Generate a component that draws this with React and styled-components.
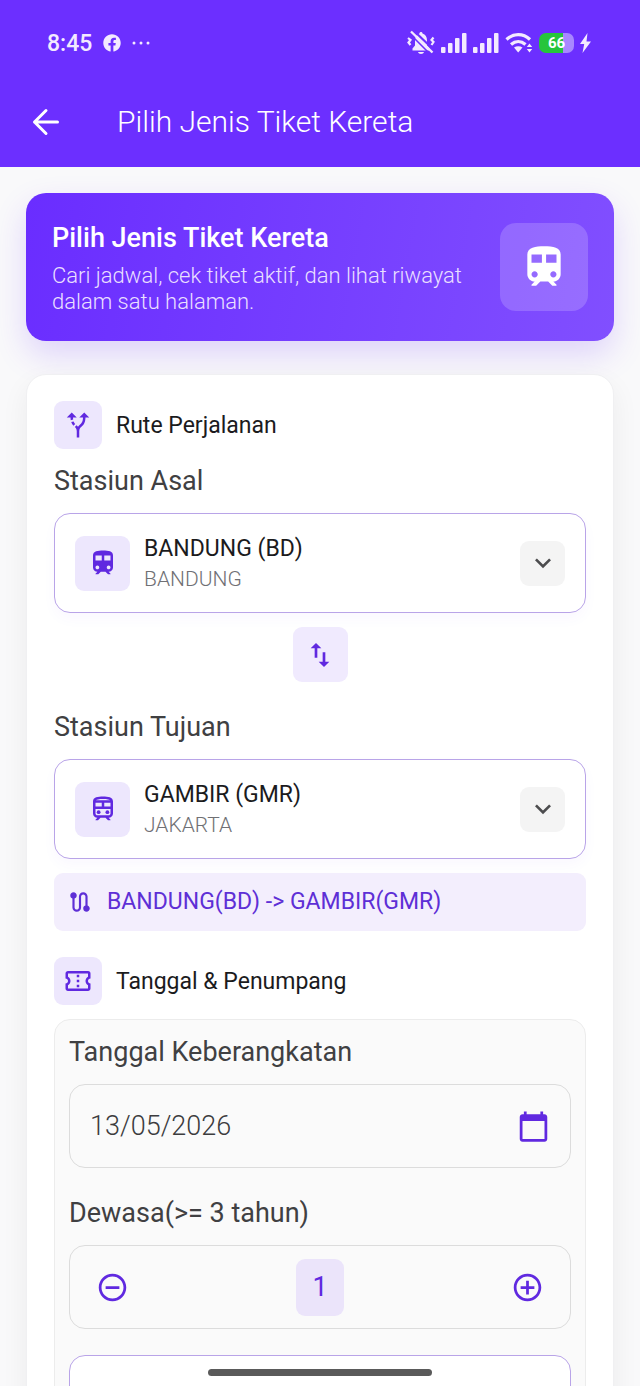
import React, { useState } from 'react'
import styled, { createGlobalStyle } from 'styled-components'
import { FaFacebook } from 'react-icons/fa'
import {
  MdAddCircleOutline,
  MdAltRoute,
  MdCalendarToday,
  MdKeyboardArrowDown,
  MdOutlineConfirmationNumber,
  MdOutlineTrain,
  MdRemoveCircleOutline,
  MdRoute,
  MdSwapVert,
  MdTrain,
} from 'react-icons/md'

const GlobalStyle = createGlobalStyle`
* { box-sizing: border-box; }
body {
  margin: 0;
  background: #f9f9fa;
  color: #1b1b1d;
  font-family: Roboto, "Liberation Sans", sans-serif;
}
button, input, select {
  font-family: inherit;
  border: 0;
  padding: 0;
  margin: 0;
  background: none;
  color: inherit;
}
h1, h2, h3, p { margin: 0; }
svg { display: block; flex-shrink: 0; }
`;

const Screen = styled.div`
display: flex;
flex-direction: column;
height: 100vh;
`;

const Header = styled.header`
flex-shrink: 0;
background: #6c2fff;
color: #fff;
`;

const StatusBar = styled.div`
display: flex;
align-items: center;
justify-content: space-between;
height: 77px;
padding: 8px 49px 0 47px;
color: #f3eaff;
`;

const StatusGroup = styled.div`
display: flex;
align-items: center;
gap: ${(p) => p.$gap}px;
`;

const Clock = styled.span`
padding-top: 2px;
font-size: 23px;
font-weight: 500;
line-height: 28px;
`;

const Battery = styled.span`
display: flex;
align-items: center;
justify-content: center;
width: 35px;
height: 20px;
border-radius: 7px;
background: linear-gradient(90deg, #26c53c 68%, #a887ff 68%);
color: #fff;
font-size: 15px;
font-weight: 700;
line-height: 20px;
`;

const Toolbar = styled.div`
display: flex;
align-items: center;
gap: 57px;
height: 90px;
padding: 0 32px;
`;

const BackButton = styled.button`
display: flex;
cursor: pointer;
`;

const PageTitle = styled.h1`
font-size: 30px;
font-weight: 300;
line-height: 36px;
`;

const Content = styled.main`
flex: 1;
min-height: 0;
overflow-y: auto;
scrollbar-width: none;
padding: 26px;
`;

const Hero = styled.section`
display: flex;
align-items: center;
justify-content: space-between;
gap: 26px;
padding: 26px;
border-radius: 20px;
background: linear-gradient(100deg, #6a2dff, #814fff);
box-shadow: 0 14px 32px rgba(108, 47, 255, 0.18);
color: #fff;
`;

const HeroTitle = styled.h2`
padding-top: 2px;
font-size: 27px;
font-weight: 500;
line-height: 34px;
`;

const HeroText = styled.p`
margin-top: 8px;
font-size: 22px;
font-weight: 300;
line-height: 26px;
color: #e9dfff;
`;

const HeroIcon = styled.div`
display: flex;
align-items: center;
justify-content: center;
flex-shrink: 0;
width: 88px;
height: 88px;
border-radius: 16px;
background: rgba(255, 255, 255, 0.18);
`;

const Card = styled.form`
margin-top: 33px;
padding: 26px 27px;
border: 1px solid #f0f0f2;
border-radius: 20px;
background: #fff;
box-shadow: 0 10px 28px rgba(0, 0, 0, 0.06);
`;

const SectionHead = styled.div`
display: flex;
align-items: center;
gap: 14px;
margin-top: ${(p) => p.$top || 0}px;
`;

const SectionTitle = styled.h3`
padding-top: 2px;
font-size: 23px;
font-weight: 400;
line-height: 30px;
`;

const Tile = styled.span`
display: flex;
align-items: center;
justify-content: center;
flex-shrink: 0;
width: ${(p) => p.$size}px;
height: ${(p) => p.$size}px;
border-radius: 9px;
background: #ede7fd;
color: #6029e0;
`;

const FieldLabel = styled.label`
display: block;
margin: ${(p) => p.$top || 0}px 0 14px;
font-size: 27px;
line-height: 36px;
color: #404042;
`;

const StationBox = styled.div`
display: flex;
align-items: center;
gap: 14px;
height: 100px;
padding: 0 20px;
border: 1px solid #b9a4e8;
border-radius: 16px;
background: #fff;
box-shadow: 0 6px 14px rgba(108, 47, 255, 0.03);
`;

const StationText = styled.div`
flex: 1;
min-width: 0;
padding-top: 2px;
`;

const StationSelect = styled.select`
display: block;
width: 100%;
height: 30px;
appearance: none;
font-size: 23px;
line-height: 30px;
cursor: pointer;
`;

const StationCity = styled.p`
font-size: 21px;
font-weight: 300;
line-height: 30px;
color: #707074;
`;

const Chevron = styled.span`
display: flex;
align-items: center;
justify-content: center;
width: 45px;
height: 45px;
border-radius: 9px;
background: #f4f4f4;
color: #4c4c4e;
`;

const SwapButton = styled.button`
display: flex;
align-items: center;
justify-content: center;
width: 55px;
height: 55px;
margin: 14px auto 0;
border-radius: 9px;
background: #f0eafe;
color: #6029e0;
cursor: pointer;
`;

const RouteSummary = styled.div`
display: flex;
align-items: center;
gap: 14px;
min-height: 58px;
margin-top: 14px;
padding: 0 13px;
border-radius: 9px;
background: #f3eefd;
color: #5e2fd6;
font-size: 23px;
line-height: 30px;
`;

const Panel = styled.div`
margin-top: 14px;
padding: 14px;
border: 1px solid #ececec;
border-radius: 16px;
background: #fafafa;
`;

const InputBox = styled.div`
display: flex;
align-items: center;
justify-content: space-between;
height: 84px;
padding: 0 ${(p) => p.$pad}px;
border: 1px solid #dcdcdc;
border-radius: 16px;
color: #6029e0;
`;

const DateInput = styled.input`
flex: 1;
min-width: 0;
font-size: 27px;
font-weight: 300;
line-height: 36px;
color: #3c3c3e;
`;

const StepButton = styled.button`
display: flex;
cursor: pointer;
`;

const Count = styled.output`
width: 48px;
border-radius: 9px;
background: #ebe4fa;
text-align: center;
font-size: 27px;
font-weight: 400;
line-height: 57px;
`;

const NextBox = styled.div`
height: 100px;
margin-top: 26px;
border: 1px solid #b9a4e8;
border-radius: 16px;
background: #fff;
`;

const HomeIndicator = styled.div`
position: fixed;
bottom: 10px;
left: 50%;
width: 35%;
height: 7px;
border-radius: 4px;
background: #5a5a5a;
transform: translateX(-50%);
`;

const BackArrow = () => (
  <svg width="28" height="28" viewBox="0 0 28 28" fill="none" stroke="currentColor" strokeWidth="3" strokeLinecap="round" strokeLinejoin="round">
    <path d="M25.500 14H2.500M14 2.500L2.500 14L14 25.500" />
  </svg>
)

const MutedBell = () => (
  <svg width="28" height="26" viewBox="0 0 28 26" fill="none" stroke="currentColor">
    <path d="M12.500 3.500C12.500 1.500 15.500 1.500 15.500 3.500C18.500 4.500 20 7 20 10.500V15.500L22.500 18.500V20.500H5.500V18.500L8 15.500V10.500C8 7 9.500 4.500 12.500 3.500Z" fill="currentColor" stroke="none" />
    <path d="M11 22H17C16.500 24.500 11.500 24.500 11 22Z" fill="currentColor" stroke="none" />
    <path d="M1 8L3.500 10L1.500 12.500L3.500 15M26.500 7.500L24.500 10L26.500 12L24.500 15" strokeWidth="2.200" />
    <path d="M6 0L27.500 20.500" stroke="#6c2fff" strokeWidth="2.200" />
    <path d="M4 1.500L25.500 22.500" strokeWidth="2.400" />
    <path d="M2.500 3.500L23.500 24.500" stroke="#6c2fff" strokeWidth="1.600" />
  </svg>
)

const Signal = () => (
  <svg width="26" height="20" viewBox="0 0 26 20" fill="currentColor">
    <rect x="0" y="14" width="4.500" height="6" rx="1" />
    <rect x="7" y="10" width="4.500" height="10" rx="1" />
    <rect x="14" y="5" width="4.500" height="15" rx="1" />
    <rect x="21" y="0" width="4.500" height="20" rx="1" />
  </svg>
)

const Wifi = () => (
  <svg width="28" height="20" viewBox="0 0 28 20" fill="none" stroke="currentColor">
    <path d="M1.500 6.500C8.500 0 18 0 25 6.500" strokeWidth="3.200" />
    <path d="M6 11.500C10.500 7.500 16 7.500 20.500 11.500" strokeWidth="3.200" />
    <path d="M9 14.500C11.500 12.800 15 12.800 17.500 14.500L13.200 19.500Z" fill="currentColor" stroke="none" />
    <path d="M24.500 10.500L27.200 14H21.800ZM24.500 19.500L27.200 16H21.800Z" fill="currentColor" stroke="none" />
  </svg>
)

const Bolt = () => (
  <svg width="11" height="20" viewBox="0 0 11 20" fill="currentColor">
    <path d="M7.500 0L0 11H4.200L2.500 20L11 8.500H6.500Z" />
  </svg>
)

const Dots = () => (
  <svg width="18" height="4" viewBox="0 0 18 4" fill="currentColor">
    <circle cx="2" cy="2" r="1.500" />
    <circle cx="9" cy="2" r="1.500" />
    <circle cx="16" cy="2" r="1.500" />
  </svg>
)

const stations = {
  BD: { name: 'BANDUNG', city: 'BANDUNG' },
  GMR: { name: 'GAMBIR', city: 'JAKARTA' },
}

const StationField = ({ id, icon, value, onChange }) => (
  <StationBox>
    <Tile $size={55}>{icon}</Tile>
    <StationText>
      <StationSelect id={id} value={value} onChange={(e) => onChange(e.target.value)}>
        {Object.keys(stations).map((code) => (
          <option key={code} value={code}>{`${stations[code].name} (${code})`}</option>
        ))}
      </StationSelect>
      <StationCity>{stations[value].city}</StationCity>
    </StationText>
    <Chevron><MdKeyboardArrowDown size={32} /></Chevron>
  </StationBox>
)

const App = () => {
  const [from, setFrom] = useState('BD')
  const [to, setTo] = useState('GMR')
  const [date, setDate] = useState('13/05/2026')
  const [adults, setAdults] = useState(1)

  const swap = () => {
    setFrom(to)
    setTo(from)
  }

  return (
    <Screen>
      <GlobalStyle />
      <Header>
        <StatusBar>
          <StatusGroup $gap={11}>
            <Clock>8:45</Clock>
            <FaFacebook size={18} />
            <Dots />
          </StatusGroup>
          <StatusGroup $gap={6}>
            <MutedBell />
            <Signal />
            <Signal />
            <Wifi />
            <Battery>66</Battery>
            <Bolt />
          </StatusGroup>
        </StatusBar>
        <Toolbar>
          <BackButton type="button" aria-label="Kembali"><BackArrow /></BackButton>
          <PageTitle>Pilih Jenis Tiket Kereta</PageTitle>
        </Toolbar>
      </Header>
      <Content>
        <Hero>
          <div>
            <HeroTitle>Pilih Jenis Tiket Kereta</HeroTitle>
            <HeroText>Cari jadwal, cek tiket aktif, dan lihat riwayat dalam satu halaman.</HeroText>
          </div>
          <HeroIcon><MdTrain size={50} /></HeroIcon>
        </Hero>
        <Card>
          <SectionHead>
            <Tile $size={48}><MdAltRoute size={30} /></Tile>
            <SectionTitle>Rute Perjalanan</SectionTitle>
          </SectionHead>
          <FieldLabel htmlFor="asal" $top={14}>Stasiun Asal</FieldLabel>
          <StationField id="asal" icon={<MdTrain size={30} />} value={from} onChange={setFrom} />
          <SwapButton type="button" aria-label="Tukar stasiun" onClick={swap}>
            <MdSwapVert size={32} />
          </SwapButton>
          <FieldLabel htmlFor="tujuan" $top={27}>Stasiun Tujuan</FieldLabel>
          <StationField id="tujuan" icon={<MdOutlineTrain size={30} />} value={to} onChange={setTo} />
          <RouteSummary>
            <MdRoute size={26} />
            {`${stations[from].name}(${from}) -> ${stations[to].name}(${to})`}
          </RouteSummary>
          <SectionHead $top={26}>
            <Tile $size={48}><MdOutlineConfirmationNumber size={30} /></Tile>
            <SectionTitle>Tanggal &amp; Penumpang</SectionTitle>
          </SectionHead>
          <Panel>
            <FieldLabel htmlFor="tanggal">Tanggal Keberangkatan</FieldLabel>
            <InputBox $pad={20}>
              <DateInput id="tanggal" value={date} onChange={(e) => setDate(e.target.value)} />
              <MdCalendarToday size={33} />
            </InputBox>
            <FieldLabel htmlFor="dewasa" $top={27}>Dewasa(&gt;= 3 tahun)</FieldLabel>
            <InputBox $pad={26}>
              <StepButton type="button" aria-label="Kurangi" onClick={() => setAdults(Math.max(1, adults - 1))}>
                <MdRemoveCircleOutline size={33} />
              </StepButton>
              <Count id="dewasa">{adults}</Count>
              <StepButton type="button" aria-label="Tambah" onClick={() => setAdults(adults + 1)}>
                <MdAddCircleOutline size={33} />
              </StepButton>
            </InputBox>
            <NextBox />
          </Panel>
        </Card>
      </Content>
      <HomeIndicator />
    </Screen>
  )
}

export default App
